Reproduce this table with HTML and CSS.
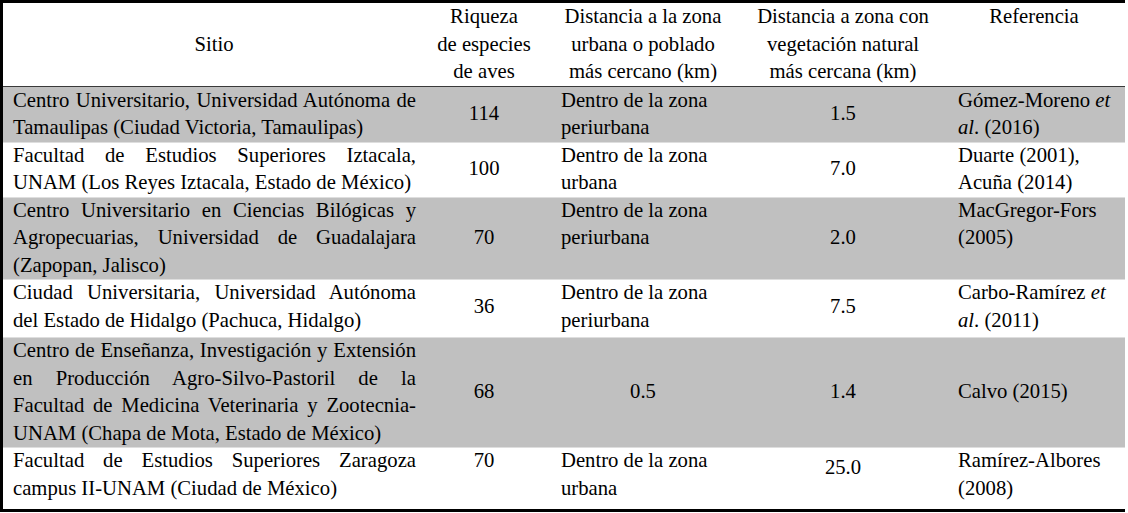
FILE: index.html
```html
<!DOCTYPE html>
<html lang="es">
<head>
<meta charset="utf-8">
<title>Tabla de sitios</title>
<link rel="stylesheet" href="styles.css">
</head>
<body>
<table class="tbl">
  <colgroup>
    <col class="c1"><col class="c2"><col class="c3"><col class="c4"><col class="c5">
  </colgroup>
  <thead>
    <tr>
      <th class="h-sitio">Sitio</th>
      <th>Riqueza<br>de especies<br>de aves</th>
      <th>Distancia a la zona<br>urbana o poblado<br>más cercano (km)</th>
      <th>Distancia a zona con<br>vegetación natural<br>más cercana (km)</th>
      <th>Referencia</th>
    </tr>
  </thead>
  <tbody>
    <tr class="gray">
      <td class="site"><span class="ln j">Centro Universitario, Universidad Autónoma de</span><span class="ln">Tamaulipas (Ciudad Victoria, Tamaulipas)</span></td>
      <td class="num">114</td>
      <td class="txt">Dentro de la zona<br>periurbana</td>
      <td class="num">1.5</td>
      <td class="ref">Gómez-Moreno <i>et</i><br><i>al</i>. (2016)</td>
    </tr>
    <tr>
      <td class="site"><span class="ln j">Facultad de Estudios Superiores Iztacala,</span><span class="ln">UNAM (Los Reyes Iztacala, Estado de México)</span></td>
      <td class="num">100</td>
      <td class="txt">Dentro de la zona<br>urbana</td>
      <td class="num">7.0</td>
      <td class="ref">Duarte (2001),<br>Acuña (2014)</td>
    </tr>
    <tr class="gray">
      <td class="site"><span class="ln j">Centro Universitario en Ciencias Bilógicas y</span><span class="ln j">Agropecuarias, Universidad de Guadalajara</span><span class="ln">(Zapopan, Jalisco)</span></td>
      <td class="num">70</td>
      <td class="txt">Dentro de la zona<br>periurbana</td>
      <td class="num">2.0</td>
      <td class="ref">MacGregor-Fors<br>(2005)</td>
    </tr>
    <tr class="pad3">
      <td class="site"><span class="ln j">Ciudad Universitaria, Universidad Autónoma</span><span class="ln">del Estado de Hidalgo (Pachuca, Hidalgo)</span></td>
      <td class="num">36</td>
      <td class="txt">Dentro de la zona<br>periurbana</td>
      <td class="num">7.5</td>
      <td class="ref">Carbo-Ramírez <i>et</i><br><i>al</i>. (2011)</td>
    </tr>
    <tr class="gray">
      <td class="site"><span class="ln j">Centro de Enseñanza, Investigación y Extensión</span><span class="ln j">en Producción Agro-Silvo-Pastoril de la</span><span class="ln j">Facultad de Medicina Veterinaria y Zootecnia-</span><span class="ln">UNAM (Chapa de Mota, Estado de México)</span></td>
      <td class="num">68</td>
      <td class="num">0.5</td>
      <td class="num">1.4</td>
      <td class="ref mid">Calvo (2015)</td>
    </tr>
    <tr class="pad5">
      <td class="site"><span class="ln j">Facultad de Estudios Superiores Zaragoza</span><span class="ln">campus II-UNAM (Ciudad de México)</span></td>
      <td class="num top">70</td>
      <td class="txt">Dentro de la zona<br>urbana</td>
      <td class="num low">25.0</td>
      <td class="ref">Ramírez-Albores<br>(2008)</td>
    </tr>
  </tbody>
</table>
</body>
</html>
```

FILE: styles.css
```css
html, body {
  margin: 0;
  padding: 0;
  background: #ffffff;
}

body {
  font-family: "Liberation Serif", "Times New Roman", serif;
  font-size: 20.7px;
  line-height: 27.5px;
  color: #000000;
}

.tbl {
  width: 1125px;
  table-layout: fixed;
  border-collapse: separate;
  border-spacing: 0;
  border-top: 3px solid #000;
  border-left: 3px solid #000;
  border-bottom: 3px solid #000;
}

.c1 { width: 422px; }
.c2 { width: 118px; }
.c3 { width: 200px; }
.c4 { width: 200px; }
.c5 { width: 182px; }

th, td {
  padding: 0;
  font-weight: normal;
  vertical-align: top;
  color: #000;
}

th {
  text-align: center;
  border-bottom: 1px solid #3a3a3a;
}

th.h-sitio {
  vertical-align: middle;
}

tbody td {
  box-shadow: inset 0 1px 0 #dedede;
}

tbody tr:first-child td {
  box-shadow: none;
}

tr.gray td {
  background: #c0c0c0;
}

.site {
  padding: 0 9px 0 10px;
  text-align: left;
}

.ln {
  display: block;
  text-align: left;
  white-space: nowrap;
}

.ln.j {
  white-space: normal;
  text-align: justify;
  text-align-last: justify;
}

.num {
  text-align: center;
  vertical-align: middle;
}

.num.top {
  vertical-align: top;
}

.num.low {
  vertical-align: top;
  padding-top: 7px;
}

.txt {
  padding-left: 18px;
  text-align: left;
}

.ref {
  padding: 0 6px 0 15px;
  text-align: left;
}

.ref.mid {
  vertical-align: middle;
}

tr.pad3 td {
  padding-bottom: 3px;
}

tr.pad5 td {
  padding-bottom: 7px;
}
```
